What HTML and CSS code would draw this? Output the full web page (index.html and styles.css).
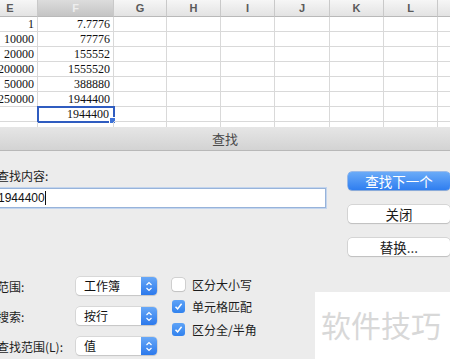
FILE: index.html
```html
<!DOCTYPE html>
<html lang="zh-CN">

<head>
    <meta charset="UTF-8" />
    <title>查找</title>
    <link rel="stylesheet" href="styles.css">
</head>

<body>
    <!-- 工作表 -->
    <div class="sheet">
        <div class="grid">
            <div class="head">E</div>
            <div class="head head-on">F</div>
            <div class="head">G</div>
            <div class="head">H</div>
            <div class="head">I</div>
            <div class="head">J</div>
            <div class="head">K</div>
            <div class="head">L</div>
            <div class="head"></div>

            <div class="cell">1</div><div class="cell">7.7776</div><div class="cell"></div><div class="cell"></div><div class="cell"></div><div class="cell"></div><div class="cell"></div><div class="cell"></div><div class="cell"></div>
            <div class="cell">10000</div><div class="cell">77776</div><div class="cell"></div><div class="cell"></div><div class="cell"></div><div class="cell"></div><div class="cell"></div><div class="cell"></div><div class="cell"></div>
            <div class="cell">20000</div><div class="cell">155552</div><div class="cell"></div><div class="cell"></div><div class="cell"></div><div class="cell"></div><div class="cell"></div><div class="cell"></div><div class="cell"></div>
            <div class="cell">200000</div><div class="cell">1555520</div><div class="cell"></div><div class="cell"></div><div class="cell"></div><div class="cell"></div><div class="cell"></div><div class="cell"></div><div class="cell"></div>
            <div class="cell">50000</div><div class="cell">388880</div><div class="cell"></div><div class="cell"></div><div class="cell"></div><div class="cell"></div><div class="cell"></div><div class="cell"></div><div class="cell"></div>
            <div class="cell">250000</div><div class="cell">1944400</div><div class="cell"></div><div class="cell"></div><div class="cell"></div><div class="cell"></div><div class="cell"></div><div class="cell"></div><div class="cell"></div>
            <div class="cell"></div><div class="cell cell-active">1944400</div><div class="cell"></div><div class="cell"></div><div class="cell"></div><div class="cell"></div><div class="cell"></div><div class="cell"></div><div class="cell"></div>
            <div class="cell"></div><div class="cell"></div><div class="cell"></div><div class="cell"></div><div class="cell"></div><div class="cell"></div><div class="cell"></div><div class="cell"></div><div class="cell"></div>
        </div>
    </div>

    <!-- 查找对话框 -->
    <div class="dialog">
        <div class="titlebar">查找</div>
        <div class="dialog-body">
            <div class="main">
                <div class="field-label">查找内容:</div>
                <div class="search-input"><span>1944400</span><span class="caret"></span></div>

                <div class="options">
                    <div class="selects">
                        <div class="select-row">
                            <span class="opt-label">范围:</span>
                            <div class="popup"><span class="popup-text">工作簿</span><span class="stepper"><svg width="8" height="11" viewBox="0 0 8 11"><path d="M1.5 4 L4 1.5 L6.5 4 M1.5 7 L4 9.5 L6.5 7" fill="none" stroke="#fff" stroke-width="1.2"/></svg></span></div>
                        </div>
                        <div class="select-row">
                            <span class="opt-label">搜索:</span>
                            <div class="popup"><span class="popup-text">按行</span><span class="stepper"><svg width="8" height="11" viewBox="0 0 8 11"><path d="M1.5 4 L4 1.5 L6.5 4 M1.5 7 L4 9.5 L6.5 7" fill="none" stroke="#fff" stroke-width="1.2"/></svg></span></div>
                        </div>
                        <div class="select-row">
                            <span class="opt-label">查找范围(L):</span>
                            <div class="popup"><span class="popup-text">值</span><span class="stepper"><svg width="8" height="11" viewBox="0 0 8 11"><path d="M1.5 4 L4 1.5 L6.5 4 M1.5 7 L4 9.5 L6.5 7" fill="none" stroke="#fff" stroke-width="1.2"/></svg></span></div>
                        </div>
                    </div>
                    <div class="checks">
                        <div class="check-row"><span class="box"></span>区分大小写</div>
                        <div class="check-row"><span class="box box-on"><svg width="9" height="9" viewBox="0 0 9 9"><path d="M1.5 4.8 L3.6 6.9 L7.6 1.8" fill="none" stroke="#fff" stroke-width="1.5"/></svg></span>单元格匹配</div>
                        <div class="check-row"><span class="box box-on"><svg width="9" height="9" viewBox="0 0 9 9"><path d="M1.5 4.8 L3.6 6.9 L7.6 1.8" fill="none" stroke="#fff" stroke-width="1.5"/></svg></span>区分全/半角</div>
                    </div>
                </div>
            </div>

            <div class="actions">
                <button class="btn btn-blue">查找下一个</button>
                <button class="btn">关闭</button>
                <button class="btn">替换...</button>
            </div>
        </div>
    </div>

    <div class="watermark">软件技巧</div>
</body>

</html>
```

FILE: styles.css
```css
* {
    box-sizing: border-box;
}

body {
    margin: 0;
    padding: 0;
    width: 450px;
    height: 359px;
    overflow: hidden;
    background: #ececec;
    font-family: "Noto Sans CJK SC", "Noto Sans", sans-serif;
}

/* 工作表 */
.sheet {
    height: 127px;
    overflow: hidden;
    background: #fff;
}

.grid {
    display: grid;
    margin-left: -17px;
    grid-template-columns: 55px 76px 53px 54px 54px 55px 54px 54px 60px;
    grid-template-rows: 17px repeat(8, 15px);
}

.head {
    background: linear-gradient(#f6f6f6, #e3e3e3);
    border-right: 1px solid #c9c9c9;
    border-bottom: 1px solid #b9b9b9;
    text-align: center;
    font-family: "Liberation Sans", sans-serif;
    font-weight: bold;
    font-size: 11px;
    line-height: 16px;
    color: #5a5a5a;
}

.head-on {
    background: linear-gradient(#dcdcdc, #c4c4c4);
    color: #eeeeee;
}

.cell {
    position: relative;
    border-right: 1px solid #d9d9d9;
    border-bottom: 1px solid #d9d9d9;
    text-align: right;
    padding-right: 3px;
    font-family: "Liberation Serif", serif;
    font-size: 12px;
    line-height: 14px;
    color: #111;
}

.cell-active {
    outline: 2px solid #2f5cc0;
    outline-offset: -1px;
    padding-right: 4px;
}

.cell-active::after {
    content: "";
    position: absolute;
    right: -3px;
    bottom: -3px;
    width: 5px;
    height: 5px;
    background: #3d72d8;
    border: 1px solid #fff;
}

/* 对话框 */
.titlebar {
    height: 24px;
    background: linear-gradient(#e6e6e6, #d3d3d3);
    border-bottom: 1px solid #b8b8b8;
    text-align: center;
    font-size: 13px;
    line-height: 23px;
    color: #4a4a4a;
}

.dialog-body {
    display: flex;
    margin-left: -3px;
}

.main {
    width: 331px;
    padding-top: 16px;
}

.field-label {
    font-size: 12px;
    line-height: 18px;
    color: #1c1c1c;
}

.search-input {
    margin-top: 3px;
    height: 20px;
    background: #fff;
    border: 1px solid #97b3da;
    box-shadow: 0 0 0 1px #c3d5ee;
    font-family: "Liberation Sans", sans-serif;
    font-size: 12px;
    line-height: 18px;
    color: #111;
    display: flex;
    align-items: center;
}

.caret {
    width: 1px;
    height: 14px;
    background: #111;
}

.options {
    display: flex;
    margin-top: 69px;
}

.selects {
    display: flex;
    flex-direction: column;
    gap: 12px;
}

.select-row {
    display: flex;
    align-items: center;
    height: 18px;
}

.opt-label {
    width: 79px;
    font-size: 12px;
    color: #1c1c1c;
}

.popup {
    width: 81px;
    height: 18px;
    display: flex;
    background: #fff;
    border-radius: 4px;
    box-shadow: 0 0 0 0.5px #c4c4c4, 0 1px 1px rgba(0, 0, 0, 0.15);
}

.popup-text {
    flex: 1;
    padding-left: 8px;
    font-size: 12px;
    line-height: 18px;
    color: #111;
}

.stepper {
    width: 16px;
    display: flex;
    align-items: center;
    justify-content: center;
    background: linear-gradient(#68a8f7, #2c79ec);
    border-radius: 0 4px 4px 0;
}

.checks {
    margin-left: 15px;
    margin-top: -4px;
}

.check-row {
    display: flex;
    align-items: center;
    height: 22.5px;
    font-size: 12px;
    color: #1c1c1c;
}

.box {
    width: 13px;
    height: 13px;
    margin-right: 7px;
    background: #fff;
    border-radius: 3px;
    box-shadow: 0 0 0 0.5px #b5b5b5, 0 1px 1px rgba(0, 0, 0, 0.12);
    display: flex;
    align-items: center;
    justify-content: center;
}

.box-on {
    background: linear-gradient(#5ea3f7, #3182ee);
    box-shadow: none;
}

.actions {
    margin-left: 22px;
    padding-top: 21px;
    display: flex;
    flex-direction: column;
    gap: 15px;
}

.btn {
    width: 102px;
    height: 18px;
    padding: 0;
    border: none;
    border-radius: 4px;
    background: #fff;
    box-shadow: 0 0 0 0.5px #bdbdbd, 0 1px 1px rgba(0, 0, 0, 0.18);
    font-family: "Noto Sans CJK SC", sans-serif;
    font-size: 13.5px;
    line-height: 18px;
    color: #1c1c1c;
}

.btn-blue {
    background: linear-gradient(#6aabf8, #2f7ef0);
    box-shadow: 0 0 0 0.5px #4b8ae6, 0 1px 1px rgba(0, 0, 0, 0.15);
    color: #fff;
}

/* 水印 */
.watermark {
    position: absolute;
    left: 315px;
    top: 292px;
    width: 135px;
    height: 67px;
    background: #fff;
    padding-left: 6px;
    padding-top: 12px;
    font-size: 30px;
    line-height: 40px;
    color: #d8d8d8;
    white-space: nowrap;
}
```
